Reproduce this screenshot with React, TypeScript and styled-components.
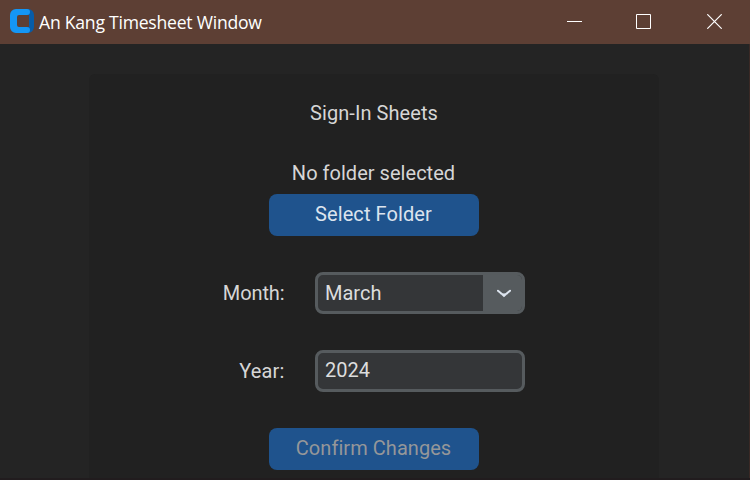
import React from "react";
import styled, { createGlobalStyle } from "styled-components";

const GlobalStyle = createGlobalStyle`
  * { box-sizing: border-box; }
  body { margin: 0; background: #242424; overflow: hidden; }
`;

const Window = styled.div`
  width: 750px;
  height: 480px;
  display: flex;
  flex-direction: column;
  overflow: hidden;
  background: #242424;
  border-bottom: 2px solid #211c1e;
  font-family: Roboto, sans-serif;
  font-size: 20px;
  color: #dce4ee;
`;

const TitleBar = styled.header`
  flex: none;
  height: 44px;
  display: flex;
  align-items: center;
  background: #5d3f34;
`;

const AppIcon = styled.svg`
  flex: none;
  width: 24px;
  height: 24px;
  margin: 0 5px 2px 10px;
`;

const Title = styled.h1`
  margin: 0;
  flex: 1;
  font: 400 17.6px/24px "Open Sans", sans-serif;
  letter-spacing: -0.24px;
  color: #fff;
  white-space: nowrap;
`;

const WindowButton = styled.button<{ $width?: number }>`
  width: ${(p) => p.$width ?? 70}px;
  height: 44px;
  padding: 0;
  border: 0;
  background: none;
  display: flex;
  align-items: center;
  justify-content: center;

  svg {
    display: block;
    margin-bottom: 1px;
  }
`;

const Body = styled.main`
  flex: 1;
  min-height: 0;
  display: flex;
  flex-direction: column;
  align-items: center;
  padding: 30px 2px 0 0;
  border-right: 1px solid #3a2925;
`;

const Panel = styled.section`
  flex: 1;
  width: 570px;
  display: flex;
  flex-direction: column;
  align-items: center;
  background: #212121;
  border-radius: 6px 6px 0 0;
`;

const Heading = styled.h2`
  margin: 27px 0 36px;
  padding-left: 1px;
  font-size: 20px;
  font-weight: 400;
  line-height: 24px;
  letter-spacing: 0.07px;
  color: #d6d6d6;
`;

const Status = styled.p`
  margin: 0 0 9px;
  line-height: 24px;
  letter-spacing: 0.03px;
  color: #d6d6d6;
`;

const ActionButton = styled.button<{ $disabled?: boolean }>`
  flex: none;
  width: 210px;
  height: 42px;
  padding: 0 0 2px;
  border: 0;
  border-radius: 8px;
  background: #1f538d;
  color: ${(p) => (p.$disabled ? "#959799" : "#dce4ee")};
  font: 400 20px/24px Roboto, sans-serif;
  letter-spacing: ${(p) => (p.$disabled ? 0.05 : 0.09)}px;
`;

const FieldRow = styled.div`
  flex: none;
  display: grid;
  grid-template-columns: 92px 210px;
  column-gap: 30px;
  align-items: center;
  width: 332px;
  height: 42px;
  margin: 36px 30px 0 0;

  & + & {
    margin-bottom: 36px;
  }
`;

const Label = styled.label<{ $tracking?: number }>`
  text-align: right;
  line-height: 24px;
  letter-spacing: ${(p) => p.$tracking ?? 0}px;
  color: #d6d6d6;
`;

const Control = styled.div`
  height: 42px;
  display: flex;
  align-items: stretch;
  overflow: hidden;
  border: 3px solid #565b5e;
  border-radius: 8px;
  background: #343638;
`;

const Value = styled.span<{ $lineHeight?: number }>`
  flex: 1;
  padding-left: 7.5px;
  line-height: ${(p) => p.$lineHeight ?? 36}px;
  color: #dcdddd;
`;

const DropButton = styled.span`
  width: 39px;
  display: flex;
  align-items: center;
  justify-content: center;
  padding: 1px 0 0 3px;
  background: #565b5e;
`;

export default function App() {
  return (
    <>
      <GlobalStyle />
      <Window>
        <TitleBar>
          <AppIcon viewBox="0 0 24 24">
            <path d="M16 0h2a6 6 0 0 1 6 6v12a6 6 0 0 1-6 6h-2v-6h3V6h-3z" fill="#075ca8" />
            <path
              d="M6 0h11a3 3 0 0 1 0 6H9a2 2 0 0 0-2 2v8a2 2 0 0 0 2 2h8a3 3 0 0 1 0 6H6a6 6 0 0 1-6-6V6a6 6 0 0 1 6-6z"
              fill="#1496f5"
            />
          </AppIcon>
          <Title>An Kang Timesheet Window</Title>
          <WindowButton aria-label="Minimize" $width={68}>
            <svg width="15" height="15" viewBox="0 0 15 15">
              <path d="M0 7.5h15" stroke="#fff" />
            </svg>
          </WindowButton>
          <WindowButton aria-label="Maximize">
            <svg width="15" height="15" viewBox="0 0 15 15">
              <path d="M.5.5h14v14H.5z" fill="none" stroke="#fff" />
            </svg>
          </WindowButton>
          <WindowButton aria-label="Close" $width={72}>
            <svg width="15" height="15" viewBox="0 0 15 15">
              <path d="M.3.3l14.4 14.4M14.7.3L.3 14.7" stroke="#fff" strokeWidth="1.2" />
            </svg>
          </WindowButton>
        </TitleBar>
        <Body>
          <Panel>
            <Heading>Sign-In Sheets</Heading>
            <Status>No folder selected</Status>
            <ActionButton>Select Folder</ActionButton>
            <FieldRow>
              <Label $tracking={-0.1}>Month:</Label>
              <Control>
                <Value>March</Value>
                <DropButton>
                  <svg width="16" height="9" viewBox="0 0 16 9">
                    <path
                      d="M2 1.7L6.2 5.2L8 6.9L9.8 5.2L14 1.7M5 4.5Q8 6.5 11 4.5"
                      fill="none"
                      stroke="#dce4ee"
                      strokeWidth="2"
                      strokeLinecap="round"
                    />
                  </svg>
                </DropButton>
              </Control>
            </FieldRow>
            <FieldRow>
              <Label $tracking={0.15}>Year:</Label>
              <Control>
                <Value $lineHeight={34}>2024</Value>
              </Control>
            </FieldRow>
            <ActionButton $disabled>Confirm Changes</ActionButton>
          </Panel>
        </Body>
      </Window>
    </>
  );
}
